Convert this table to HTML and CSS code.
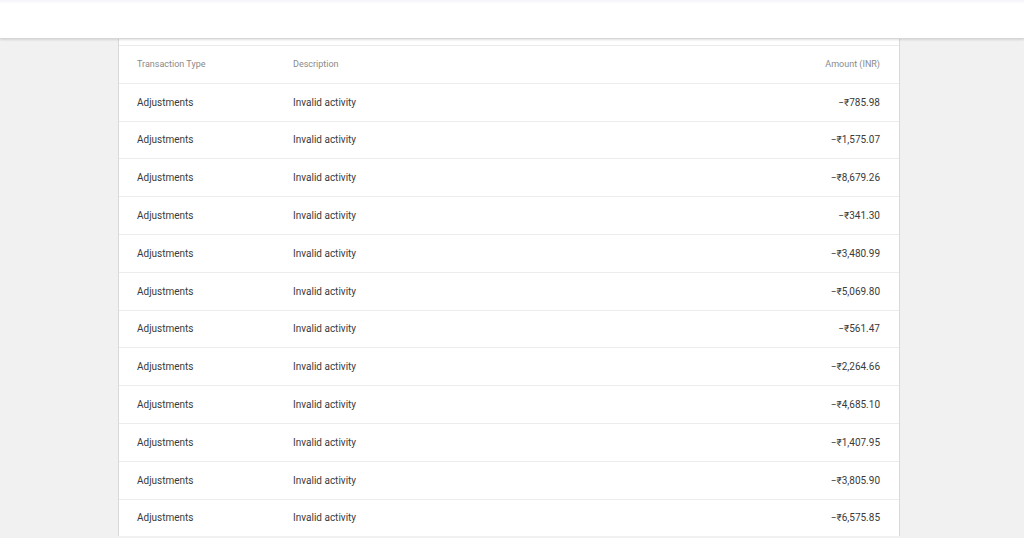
FILE: index.html
```html
<!DOCTYPE html>
<html>
<head>
<meta charset="utf-8">
<link rel="stylesheet" href="styles.css">
</head>
<body>
<header class="topbar"></header>
<main class="content">
  <section class="card">
    <div class="row head">
      <div class="c-type">Transaction Type</div>
      <div class="c-desc">Description</div>
      <div class="c-amt">Amount (INR)</div>
    </div>
    <div class="row"><div class="c-type">Adjustments</div><div class="c-desc">Invalid activity</div><div class="c-amt">−₹785.98</div></div>
    <div class="row"><div class="c-type">Adjustments</div><div class="c-desc">Invalid activity</div><div class="c-amt">−₹1,575.07</div></div>
    <div class="row"><div class="c-type">Adjustments</div><div class="c-desc">Invalid activity</div><div class="c-amt">−₹8,679.26</div></div>
    <div class="row"><div class="c-type">Adjustments</div><div class="c-desc">Invalid activity</div><div class="c-amt">−₹341.30</div></div>
    <div class="row"><div class="c-type">Adjustments</div><div class="c-desc">Invalid activity</div><div class="c-amt">−₹3,480.99</div></div>
    <div class="row"><div class="c-type">Adjustments</div><div class="c-desc">Invalid activity</div><div class="c-amt">−₹5,069.80</div></div>
    <div class="row"><div class="c-type">Adjustments</div><div class="c-desc">Invalid activity</div><div class="c-amt">−₹561.47</div></div>
    <div class="row"><div class="c-type">Adjustments</div><div class="c-desc">Invalid activity</div><div class="c-amt">−₹2,264.66</div></div>
    <div class="row"><div class="c-type">Adjustments</div><div class="c-desc">Invalid activity</div><div class="c-amt">−₹4,685.10</div></div>
    <div class="row"><div class="c-type">Adjustments</div><div class="c-desc">Invalid activity</div><div class="c-amt">−₹1,407.95</div></div>
    <div class="row"><div class="c-type">Adjustments</div><div class="c-desc">Invalid activity</div><div class="c-amt">−₹3,805.90</div></div>
    <div class="row"><div class="c-type">Adjustments</div><div class="c-desc">Invalid activity</div><div class="c-amt">−₹6,575.85</div></div>
  </section>
</main>
</body>
</html>
```
FILE: styles.css
```css
html, body {
  margin: 0;
  padding: 0;
  height: 100%;
  overflow: hidden;
}
body {
  background: #f1f1f1;
  font-family: Roboto, "Noto Sans", "Liberation Sans", Arial, sans-serif;
  color: #333;
}
.topbar {
  height: 38px;
  background: linear-gradient(#f4f4fb 0, #fff 4px, #fff 100%);
  border-bottom: 1px solid #d6d6d6;
  box-shadow: 0 1px 2px rgba(0,0,0,0.12);
  position: relative;
  z-index: 1;
}
.content {
  padding-left: 118px;
}
.card {
  width: 780px;
  background: #fff;
  border-left: 1px solid #d9d9d9;
  border-right: 1px solid #d9d9d9;
  padding-top: 6px;
}
.row {
  display: flex;
  align-items: center;
  height: 36.8px;
  border-top: 1px solid #ececec;
  padding: 0 19px 0 18px;
  font-size: 10px;
  color: #3a3a3a;
}
.row.head {
  font-size: 9px;
  color: #8a8a8a;
}
.c-type {
  width: 156px;
}
.c-desc {
  flex: 1;
}
.c-amt {
  text-align: right;
}
```
